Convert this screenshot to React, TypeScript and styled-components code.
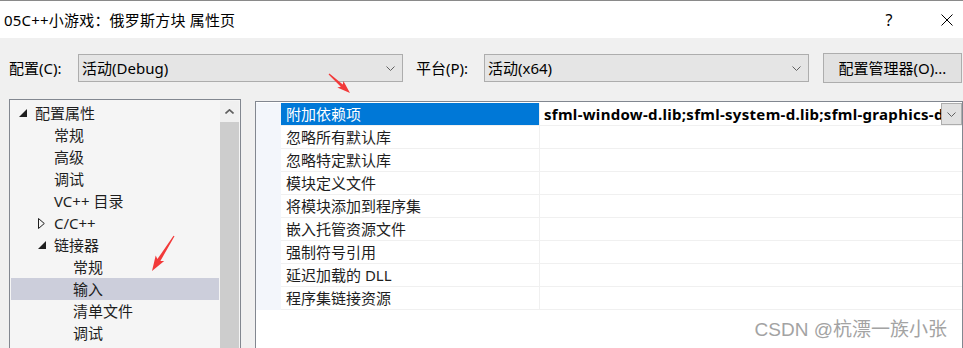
import React from "react";
import styled, { createGlobalStyle } from "styled-components";

const Global = createGlobalStyle`
  html, body { margin: 0; padding: 0; overflow: hidden; background: #f0f0f0; }
  * { box-sizing: border-box; }
  body { font-family: "Noto Sans", "Noto Sans CJK SC", sans-serif; }
`;

const FONT = `"Noto Sans", "Noto Sans CJK SC", sans-serif`;

const Window = styled.div`
  position: relative;
  width: 963px;
  height: 348px;
  overflow: hidden;
  background: #f0f0f0;
  display: flex;
  flex-direction: column;
  font-family: ${FONT};
  font-size: 15px;
  color: #000;
`;

const TitleBar = styled.div`
  height: 38px;
  flex: none;
  border-top: 1px solid #8a8a8a;
  background: #fff;
  display: flex;
  align-items: center;
  padding-left: 4px;
  padding-right: 1px;
`;

const Title = styled.div`
  font-size: 15px;
  line-height: 20px;
  letter-spacing: 0.2px;
  color: #000;
  white-space: nowrap;
`;

const TitleButton = styled.div<{ $first?: boolean }>`
  width: 30px;
  height: 30px;
  display: flex;
  align-items: center;
  justify-content: center;
  margin-left: ${(p) => (p.$first ? "auto" : "28px")};
  font-size: 16px;
  color: #000;
`;

const Body = styled.div`
  flex: 1;
  display: flex;
  flex-direction: column;
  padding: 15px 0 0 9px;
  min-height: 0;
`;

const ConfigRow = styled.div`
  display: flex;
  align-items: center;
  height: 30px;
  flex: none;
`;

const FieldLabel = styled.div<{ $gap?: number }>`
  width: ${(p) => (p.$gap ? 68 : 69)}px;
  margin-left: ${(p) => p.$gap ?? 0}px;
  line-height: 20px;
  white-space: nowrap;
`;

const Select = styled.div`
  width: 325px;
  height: 28px;
  border: 1px solid #adadad;
  background: #e5e5e5;
  display: flex;
  align-items: center;
  padding-left: 3px;
  padding-right: 7px;
  line-height: 20px;
  white-space: nowrap;
`;

const SelectText = styled.span`
  flex: 1;
`;

const ManagerButton = styled.div`
  width: 139px;
  height: 30px;
  margin-left: 14px;
  border: 1px solid #adadad;
  background: #e1e1e1;
  display: flex;
  align-items: center;
  justify-content: center;
  line-height: 20px;
  white-space: nowrap;
`;

const Main = styled.div`
  flex: 1;
  display: flex;
  align-items: flex-start;
  margin-top: 16px;
  min-height: 0;
`;

const TreePanel = styled.div`
  width: 232px;
  height: 260px;
  flex: none;
  border: 1px solid #828790;
  background: #f5f5f5;
  display: flex;
`;

const TreeList = styled.div`
  flex: 1;
  padding: 2px 0 0 1px;
  display: flex;
  flex-direction: column;
`;

const TreeRow = styled.div<{ $level: number; $selected?: boolean }>`
  height: 22px;
  display: flex;
  align-items: center;
  padding-left: ${(p) => 8 + 19 * p.$level}px;
  background: ${(p) => (p.$selected ? "#cccedb" : "transparent")};
  color: #1e1e1e;
  line-height: 20px;
  white-space: nowrap;
`;

const Expander = styled.span`
  width: 16px;
  flex: none;
  display: flex;
  align-items: center;
`;

const Scrollbar = styled.div`
  width: 19px;
  margin: 1px 1px 0 1px;
  display: flex;
  flex-direction: column;
`;

const ScrollArrow = styled.div`
  height: 21px;
  display: flex;
  align-items: center;
  justify-content: center;
  background: #f0f0f0;
`;

const ScrollThumb = styled.div`
  flex: 1;
  background: #cdcdcd;
`;

const Grid = styled.div`
  width: 708px;
  height: 260px;
  flex: none;
  margin-left: 14px;
  margin-top: 2px;
  border: 1px solid #828790;
  background: #fff;
  padding-top: 1px;
`;

const GridRow = styled.div`
  display: grid;
  grid-template-columns: 25px 259px 1fr;
  height: 23px;
`;

const Gutter = styled.div`
  background: #f3f6fb;
`;

const NameCell = styled.div<{ $selected?: boolean }>`
  display: flex;
  align-items: center;
  padding-left: 5px;
  border-right: 1px solid #f0f0f0;
  border-bottom: 1px solid #f0f0f0;
  background: ${(p) => (p.$selected ? "#0078d7" : "#fff")};
  color: ${(p) => (p.$selected ? "#fff" : "#1e1e1e")};
  line-height: 20px;
  white-space: nowrap;
`;

const ValueCell = styled.div`
  display: flex;
  align-items: flex-start;
  border-bottom: 1px solid #f0f0f0;
  min-width: 0;
`;

const ValueText = styled.div`
  flex: 1;
  min-width: 0;
  white-space: nowrap;
  font-weight: 700;
  letter-spacing: 0.3px;
  padding-left: 4px;
  height: 22px;
  line-height: 22px;
  color: #000;
`;

const ValueDrop = styled.div`
  width: 21px;
  height: 22px;
  flex: none;
  border: 1px solid #adadad;
  background: #e1e1e1;
  display: flex;
  align-items: center;
  justify-content: center;
`;

const Watermark = styled.div`
  position: absolute;
  right: 16px;
  bottom: 7px;
  font-size: 19px;
  line-height: 22px;
  color: #a3a3a3;
  text-shadow: 0 0 1px #fff;
  font-family: "Liberation Sans", "Noto Sans CJK SC", sans-serif;
  white-space: nowrap;
`;

const Overlay = styled.svg`
  position: absolute;
  left: 0;
  top: 0;
  pointer-events: none;
`;

const Chevron = ({ w = 9 }: { w?: number }) => (
  <svg width={w} height={5} viewBox="0 0 9 5">
    <polyline points="0.5,0.5 4.5,4.5 8.5,0.5" fill="none" stroke="#606060" strokeWidth="1" />
  </svg>
);

const FilledTri = () => (
  <svg width={8} height={8} viewBox="0 0 8 8">
    <polygon points="8,0 8,8 0,8" fill="#1e1e1e" />
  </svg>
);

const OpenTri = () => (
  <svg width={7} height={11} viewBox="0 0 7 11">
    <polygon points="0.5,0.5 6.3,5.5 0.5,10.5" fill="none" stroke="#1e1e1e" strokeWidth="1" />
  </svg>
);

type P = [number, number];
function arrowPoints(tail: P, tip: P, headLen: number, headW: number, tailW: number, neckW: number) {
  const dx = tip[0] - tail[0];
  const dy = tip[1] - tail[1];
  const len = Math.hypot(dx, dy);
  const ux = dx / len, uy = dy / len;
  const nx = -uy, ny = ux;
  const neck: P = [tip[0] - ux * headLen, tip[1] - uy * headLen];
  const back: P = [neck[0] - ux * 2, neck[1] - uy * 2];
  const pts: P[] = [
    [tail[0] + nx * tailW / 2, tail[1] + ny * tailW / 2],
    [neck[0] + nx * neckW / 2, neck[1] + ny * neckW / 2],
    [back[0] + nx * headW / 2, back[1] + ny * headW / 2],
    tip,
    [back[0] - nx * headW / 2, back[1] - ny * headW / 2],
    [neck[0] - nx * neckW / 2, neck[1] - ny * neckW / 2],
    [tail[0] - nx * tailW / 2, tail[1] - ny * tailW / 2],
  ];
  return pts.map((p) => `${p[0].toFixed(1)},${p[1].toFixed(1)}`).join(" ");
}

type TreeItem = { label: string; level: number; exp?: "open" | "closed"; selected?: boolean };
const tree: TreeItem[] = [
  { label: "配置属性", level: 0, exp: "open" },
  { label: "常规", level: 1 },
  { label: "高级", level: 1 },
  { label: "调试", level: 1 },
  { label: "VC++ 目录", level: 1 },
  { label: "C/C++", level: 1, exp: "closed" },
  { label: "链接器", level: 1, exp: "open" },
  { label: "常规", level: 2 },
  { label: "输入", level: 2, selected: true },
  { label: "清单文件", level: 2 },
  { label: "调试", level: 2 },
];

const props = [
  "附加依赖项",
  "忽略所有默认库",
  "忽略特定默认库",
  "模块定义文件",
  "将模块添加到程序集",
  "嵌入托管资源文件",
  "强制符号引用",
  "延迟加载的 DLL",
  "程序集链接资源",
];

export default function App() {
  return (
    <>
      <Global />
      <Window>
        <TitleBar>
          <Title>05C++小游戏：俄罗斯方块 属性页</Title>
          <TitleButton $first>?</TitleButton>
          <TitleButton>
            <svg width={12} height={12} viewBox="0 0 12 12">
              <path d="M0.5 0.5 L11.5 11.5 M11.5 0.5 L0.5 11.5" stroke="#000" strokeWidth="1" />
            </svg>
          </TitleButton>
        </TitleBar>
        <Body>
          <ConfigRow>
            <FieldLabel>配置(C):</FieldLabel>
            <Select>
              <SelectText>活动(Debug)</SelectText>
              <Chevron />
            </Select>
            <FieldLabel $gap={13}>平台(P):</FieldLabel>
            <Select>
              <SelectText>活动(x64)</SelectText>
              <Chevron />
            </Select>
            <ManagerButton>配置管理器(O)...</ManagerButton>
          </ConfigRow>
          <Main>
            <TreePanel>
              <TreeList>
                {tree.map((t, i) => (
                  <TreeRow key={i} $level={t.level} $selected={t.selected}>
                    <Expander>
                      {t.exp === "open" ? <FilledTri /> : t.exp === "closed" ? <OpenTri /> : null}
                    </Expander>
                    {t.label}
                  </TreeRow>
                ))}
              </TreeList>
              <Scrollbar>
                <ScrollArrow>
                  <svg width={9} height={5} viewBox="0 0 9 5">
                    <polyline points="0.5,4.5 4.5,0.8 8.5,4.5" fill="none" stroke="#606060" strokeWidth="1.6" />
                  </svg>
                </ScrollArrow>
                <ScrollThumb />
              </Scrollbar>
            </TreePanel>
            <Grid>
              {props.map((name, i) => (
                <GridRow key={i}>
                  <Gutter />
                  <NameCell $selected={i === 0}>{name}</NameCell>
                  <ValueCell>
                    {i === 0 && (
                      <>
                        <ValueText>sfml-window-d.lib;sfml-system-d.lib;sfml-graphics-d</ValueText>
                        <ValueDrop>
                          <Chevron />
                        </ValueDrop>
                      </>
                    )}
                  </ValueCell>
                </GridRow>
              ))}
            </Grid>
          </Main>
        </Body>
        <Watermark>CSDN @杭漂一族小张</Watermark>
        <Overlay width={963} height={348} viewBox="0 0 963 348">
          <polygon points={arrowPoints([329, 74], [350, 93], 11, 9, 1.2, 3)} fill="#f23a3a" />
          <polygon points={arrowPoints([174, 236], [152, 271], 13, 10, 1.2, 3.5)} fill="#f23a3a" />
        </Overlay>
      </Window>
    </>
  );
}
